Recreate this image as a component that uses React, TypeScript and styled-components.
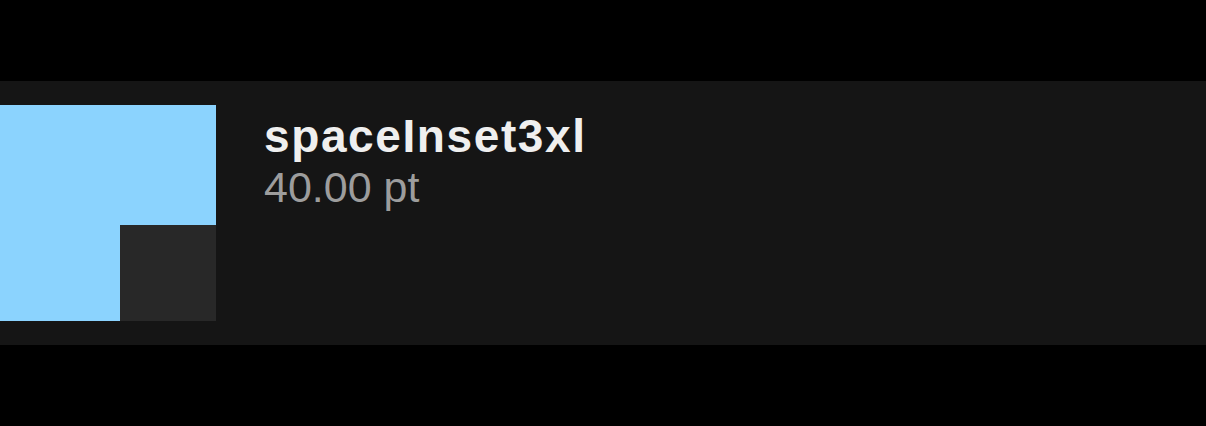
import React from "react";
import styled, { createGlobalStyle } from "styled-components";

const Global = createGlobalStyle`
  html, body {
    margin: 0;
    padding: 0;
    background: #000000;
  }
  body {
    font-family: "Liberation Sans", Arial, sans-serif;
  }
`;

const Page = styled.div`
  width: 1206px;
  height: 426px;
  background: #000000;
  padding-top: 81px;
  box-sizing: border-box;
`;

const Row = styled.div`
  display: flex;
  align-items: flex-start;
  gap: 48px;
  height: 264px;
  box-sizing: border-box;
  padding: 24px 0;
  background: #151515;
`;

const Swatch = styled.div<{ $size: number }>`
  flex: none;
  width: ${(p) => p.$size}px;
  height: ${(p) => p.$size}px;
  background: #8bd3fe;
  display: flex;
  justify-content: flex-end;
  align-items: flex-end;
`;

const Inner = styled.div<{ $size: number }>`
  width: ${(p) => p.$size}px;
  height: ${(p) => p.$size}px;
  background: #282828;
`;

const Info = styled.div`
  display: flex;
  flex-direction: column;
  padding-top: 5px;
`;

const Title = styled.div`
  font-family: "Liberation Sans", Arial, sans-serif;
  font-weight: 700;
  font-size: 46px;
  line-height: 52px;
  letter-spacing: 1.6px;
  color: #efefef;
`;

const Value = styled.div`
  font-family: "Liberation Sans", Arial, sans-serif;
  font-weight: 400;
  font-size: 43px;
  line-height: 48px;
  margin-top: 1px;
  color: #9d9d9d;
`;

export default function App() {
  return (
    <>
      <Global />
      <Page>
        <Row>
          <Swatch $size={216}>
            <Inner $size={96} />
          </Swatch>
          <Info>
            <Title>spaceInset3xl</Title>
            <Value>40.00 pt</Value>
          </Info>
        </Row>
      </Page>
    </>
  );
}
